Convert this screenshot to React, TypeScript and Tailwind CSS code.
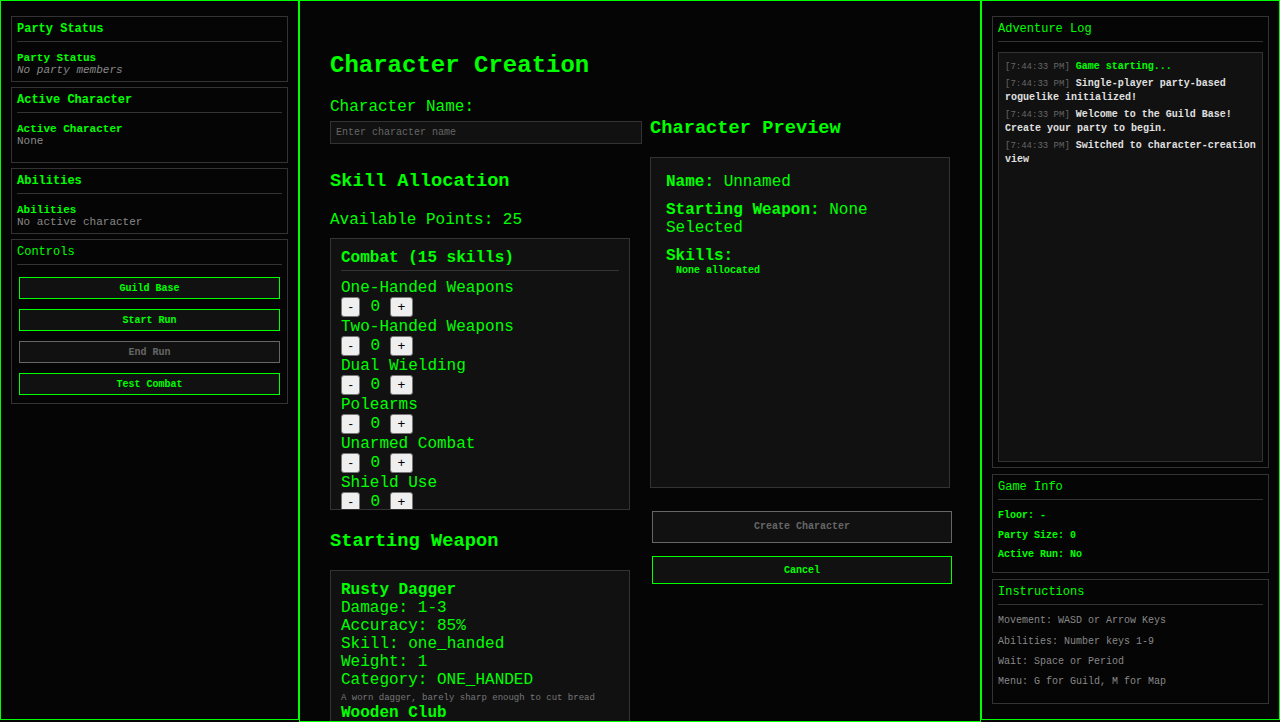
import React, { useState } from "react";

type Weapon = {
    name: string;
    damage: string;
    accuracy: number;
    skill: string;
    weight: number;
    category: string;
    description: string;
};

type LogEntry = {
    time: string;
    text: string;
    kind: "system" | "info";
};

const combatSkills = [
    "One-Handed Weapons",
    "Two-Handed Weapons",
    "Dual Wielding",
    "Polearms",
    "Unarmed Combat",
    "Shield Use",
    "Archery",
    "Crossbows",
    "Throwing",
    "Parrying",
    "Dodging",
    "Armor Use",
    "Critical Strikes",
    "Tactics",
    "Berserking",
];

const weapons: Weapon[] = [
    {
        name: "Rusty Dagger",
        damage: "1-3",
        accuracy: 85,
        skill: "one_handed",
        weight: 1,
        category: "ONE_HANDED",
        description: "A worn dagger, barely sharp enough to cut bread",
    },
    {
        name: "Wooden Club",
        damage: "2-4",
        accuracy: 75,
        skill: "one_handed",
        weight: 3,
        category: "ONE_HANDED",
        description: "A heavy piece of oak, crude but effective",
    },
];

const logEntries: LogEntry[] = [
    { time: "7:44:33 PM", text: "Game starting...", kind: "system" },
    { time: "7:44:33 PM", text: "Single-player party-based roguelike initialized!", kind: "info" },
    { time: "7:44:33 PM", text: "Welcome to the Guild Base! Create your party to begin.", kind: "info" },
    { time: "7:44:33 PM", text: "Switched to character-creation view", kind: "info" },
];

function Panel({
    title,
    boldTitle = false,
    className = "",
    children,
}: {
    title: string;
    boldTitle?: boolean;
    className?: string;
    children: React.ReactNode;
}) {
    return (
        <div className={`border border-[#333] p-[5px] ${className}`}>
            <h3
                className={`mb-[10px] border-b border-[#333] pt-[1px] pb-[5px] text-[12px] leading-[13px] ${
                    boldTitle ? "font-bold" : "font-normal"
                }`}
            >
                {title}
            </h3>
            {children}
        </div>
    );
}

function SideButton({ label, disabled = false }: { label: string; disabled?: boolean }) {
    return (
        <button
            type="button"
            disabled={disabled}
            className={`m-[2px] flex h-[22px] items-center justify-center border bg-[#111] text-[10px] font-bold ${
                disabled ? "border-[#666] text-[#666]" : "border-[#00ff00] text-[#00ff00]"
            }`}
        >
            {label}
        </button>
    );
}

export default function App() {
    const [name, setName] = useState("");
    const [points, setPoints] = useState<Record<string, number>>({});
    const available = 25 - Object.values(points).reduce((a, b) => a + b, 0);

    function changeSkill(skill: string, delta: number) {
        const current = points[skill] || 0;
        const next = current + delta;
        if (next < 0 || (delta > 0 && available <= 0)) return;
        setPoints({ ...points, [skill]: next });
    }

    return (
        <div className="flex h-[722px] w-[1280px] overflow-hidden bg-[#050505] font-['Liberation_Mono',monospace] text-[#00ff00]">
            {/* Left sidebar */}
            <aside className="flex h-[720px] w-[299px] shrink-0 flex-col gap-[5px] border border-[#00ff00] px-[10px] pt-[15px]">
                <Panel title="Party Status" boldTitle>
                    <div className="text-[11px] leading-[12px] font-bold">Party Status</div>
                    <div className="text-[11px] leading-[12px] text-[#888] italic">No party members</div>
                </Panel>
                <Panel title="Active Character" boldTitle>
                    <div className="text-[11px] leading-[12px] font-bold">Active Character</div>
                    <div className="text-[11px] leading-[12px] text-[#888]">None</div>
                    <div className="h-[10px]" />
                </Panel>
                <Panel title="Abilities" boldTitle>
                    <div className="text-[11px] leading-[12px] font-bold">Abilities</div>
                    <div className="text-[11px] leading-[12px] text-[#888]">No active character</div>
                </Panel>
                <Panel title="Controls">
                    <div className="flex flex-col gap-[6px] pb-[1px]">
                        <SideButton label="Guild Base" />
                        <SideButton label="Start Run" />
                        <SideButton label="End Run" disabled />
                        <SideButton label="Test Combat" />
                    </div>
                </Panel>
            </aside>

            {/* Main view */}
            <main className="h-[722px] w-[682px] shrink-0 overflow-hidden border border-[#00ff00] px-[30px] pt-[30px]">
                <h2 className="mt-[21px] mb-[19px] text-[24px] leading-[27px] font-bold">Character Creation</h2>

                <div className="flex items-start gap-[20px]">
                    <div className="w-[300px] shrink-0">
                        <label className="mb-[5px] block text-[16px] leading-[18px]">Character Name:</label>
                        <input
                            type="text"
                            value={name}
                            onChange={(e) => setName(e.target.value)}
                            placeholder="Enter character name"
                            className="block h-[23px] w-[312px] border border-[#333] bg-[#111] px-[5px] text-[10px] text-[#00ff00] outline-none placeholder:text-[#666]"
                        />

                        <h3 className="mt-[26.5px] mb-[19px] text-[18.72px] leading-[21px] font-bold">Skill Allocation</h3>
                        <p className="mb-[9.5px] text-[16px] leading-[18px]">Available Points: {available}</p>

                        <div className="h-[272px] overflow-hidden border border-[#333] bg-[#111] p-[10px]">
                            <h4 className="mb-[8px] border-b border-[#333] pb-[3px] text-[16px] leading-[18px] font-bold">
                                Combat ({combatSkills.length} skills)
                            </h4>
                            {combatSkills.map((skill) => (
                                <div key={skill}>
                                    <div className="text-[16px] leading-[18px]">{skill}</div>
                                    <div className="flex h-[21px] items-start">
                                        <button
                                            type="button"
                                            onClick={() => changeSkill(skill, -1)}
                                            className="h-[20px] rounded-[3px] border border-[#767676] bg-[#efefef] px-[6.5px] font-['Liberation_Sans',Arial,sans-serif] text-[13.33px] leading-[18px] text-black"
                                        >
                                            -
                                        </button>
                                        <span className="mx-[10px] text-[16px] leading-[20px]">{points[skill] || 0}</span>
                                        <button
                                            type="button"
                                            onClick={() => changeSkill(skill, 1)}
                                            className="h-[20px] rounded-[3px] border border-[#767676] bg-[#efefef] px-[6.5px] font-['Liberation_Sans',Arial,sans-serif] text-[13.33px] leading-[18px] text-black"
                                        >
                                            +
                                        </button>
                                    </div>
                                </div>
                            ))}
                        </div>

                        <h3 className="mt-[21px] mb-[18px] text-[18.72px] leading-[21px] font-bold">Starting Weapon</h3>
                        <div className="border border-[#333] bg-[#111] p-[10px]">
                            {weapons.map((w) => (
                                <div key={w.name} className="text-[16px] leading-[18px]">
                                    <div className="font-bold">{w.name}</div>
                                    <div>Damage: {w.damage}</div>
                                    <div>Accuracy: {w.accuracy}%</div>
                                    <div>Skill: {w.skill}</div>
                                    <div>Weight: {w.weight}</div>
                                    <div>Category: {w.category}</div>
                                    <div className="mt-[4px] text-[9px] leading-[11.3px] whitespace-nowrap text-[#777]">
                                        {w.description}
                                    </div>
                                </div>
                            ))}
                        </div>
                    </div>

                    {/* Preview */}
                    <div className="w-[300px] shrink-0">
                        <h3 className="mt-[20px] mb-[18px] text-[18.72px] leading-[21px] font-bold">Character Preview</h3>
                        <div className="h-[331px] border border-[#333] bg-[#111] p-[15px] text-[16px] leading-[18px]">
                            <div className="mb-[10px]">
                                <span className="font-bold">Name:</span> {name || "Unnamed"}
                            </div>
                            <div className="mb-[10px]">
                                <span className="font-bold">Starting Weapon:</span> None Selected
                            </div>
                            <div className="font-bold">Skills:</div>
                            <div className="ml-[10px] text-[10px] leading-[11.3px] font-bold">None allocated</div>
                        </div>
                        <button
                            type="button"
                            disabled
                            className="mx-[2px] mt-[22.5px] flex h-[32.5px] w-full items-center justify-center border border-[#666] bg-[#111] text-[10px] font-bold text-[#666]"
                        >
                            Create Character
                        </button>
                        <button
                            type="button"
                            className="mx-[2px] mt-[13px] flex h-[28px] w-full items-center justify-center border border-[#00ff00] bg-[#111] text-[10px] font-bold text-[#00ff00]"
                        >
                            Cancel
                        </button>
                    </div>
                </div>
            </main>

            {/* Right sidebar */}
            <aside className="flex h-[720px] w-[299px] shrink-0 flex-col gap-[6px] border border-[#00ff00] px-[10px] py-[15px]">
                <Panel title="Adventure Log" className="flex min-h-0 flex-1 flex-col">
                    <div className="min-h-0 flex-1 overflow-hidden border border-[#333] bg-[#111] px-[6px] py-[7px]">
                        {logEntries.map((entry, idx) => (
                            <div key={idx} className="mb-[3px] text-[10px] leading-[14px]">
                                <span className="text-[9px] text-[#666]">[{entry.time}]</span>{" "}
                                <span className={`font-bold ${entry.kind === "system" ? "text-[#00ff00]" : "text-[#e0e0e0]"}`}>
                                    {entry.text}
                                </span>
                            </div>
                        ))}
                    </div>
                </Panel>
                <Panel title="Game Info">
                    <div className="flex flex-col gap-[8px] pb-[7px] text-[10px] leading-[11.3px] font-bold">
                        <div>Floor: -</div>
                        <div>Party Size: 0</div>
                        <div>Active Run: No</div>
                    </div>
                </Panel>
                <Panel title="Instructions">
                    <div className="flex flex-col gap-[9px] pb-[10.5px] text-[10px] leading-[11.3px] text-[#888]">
                        <div>Movement: WASD or Arrow Keys</div>
                        <div>Abilities: Number keys 1-9</div>
                        <div>Wait: Space or Period</div>
                        <div>Menu: G for Guild, M for Map</div>
                    </div>
                </Panel>
            </aside>
        </div>
    );
}
